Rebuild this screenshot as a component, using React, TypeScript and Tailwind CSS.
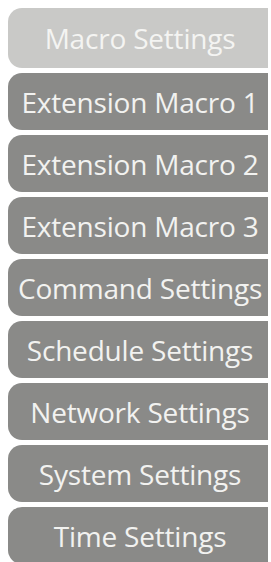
const items = [
  'Extension Macro 1',
  'Extension Macro 2',
  'Extension Macro 3',
  'Command Settings',
  'Schedule Settings',
  'Network Settings',
  'System Settings',
  'Time Settings',
];

export default function App() {
  return (
    <div
      className="w-[271px] h-[562px] overflow-hidden bg-white pt-[8px] pl-[8px] pr-[3px]"
      style={{ fontFamily: '"Open Sans", "Noto Sans", sans-serif' }}
    >
      <div className="flex flex-col gap-[5px]">
        <div className="h-[60px] rounded-l-[14px] bg-[#c9c9c7] pl-[4px] flex items-center justify-center text-[28px] font-medium tracking-[-0.2px] text-[#f4f4f2] whitespace-nowrap">
          Macro Settings
        </div>
        {items.map((label) => (
          <div
            key={label}
            className="h-[57px] shrink-0 rounded-l-[14px] bg-[#8a8a88] pl-[4px] flex items-center justify-center text-[28px] font-medium tracking-[-0.2px] text-[#f2f2f0] whitespace-nowrap"
          >
            {label}
          </div>
        ))}
      </div>
    </div>
  );
}
